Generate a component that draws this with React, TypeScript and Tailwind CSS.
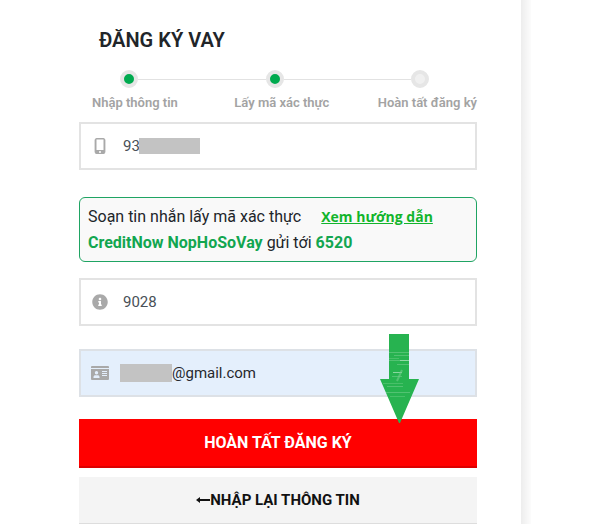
import { useState } from 'react';
import type { ReactNode } from 'react';
import { FaInfoCircle } from 'react-icons/fa';

const steps = [
	{ label: 'Nhập thông tin', done: true },
	{ label: 'Lấy mã xác thực', done: true },
	{ label: 'Hoàn tất đăng ký', done: false },
];

function StepDot({ done }: { done: boolean }) {
	return (
		<span
			className={`h-[18px] w-[18px] shrink-0 rounded-full border-4 border-[#e6e6e6] ${
				done ? 'bg-[#00aa4f]' : 'bg-[#f0f0f0]'
			}`}
		/>
	);
}

function StepLine() {
	return <span className="h-px flex-1 bg-[#e2e2e2]" />;
}

function Field({
	icon,
	filled,
	children,
}: {
	icon: ReactNode;
	filled?: boolean;
	children: ReactNode;
}) {
	return (
		<label
			className={`flex h-12 items-center border-2 pl-[10px] text-[15px] ${
				filled
					? 'border-[#dde1e6] bg-[#e4effc] text-[#26282d]'
					: 'border-[#e3e3e3] bg-white text-[#495057]'
			}`}
		>
			<span className="flex w-[18px] shrink-0 justify-center text-[#a9a9a9]">
				{icon}
			</span>
			{children}
		</label>
	);
}

function PhoneIcon() {
	return (
		<svg width="12" height="16" viewBox="0 0 12 16" aria-hidden="true">
			<path
				fill="currentColor"
				fillRule="evenodd"
				d="M2.500 0h7a1.500 1.500 0 0 1 1.500 1.500v13a1.500 1.500 0 0 1-1.500 1.500h-7a1.500 1.500 0 0 1-1.500-1.500v-13A1.500 1.500 0 0 1 2.500 0zM2.500 1.500v10.500h7v-10.500zM6 13a1 1 0 1 0 0 2 1 1 0 0 0 0-2z"
			/>
			<path
				fill="none"
				stroke="currentColor"
				strokeWidth="0.8"
				d="M1 1.500v13M11 1.500v13"
			/>
		</svg>
	);
}

function CardIcon() {
	return (
		<svg width="18" height="14" viewBox="0 0 18 14" aria-hidden="true">
			<path
				fill="currentColor"
				fillRule="evenodd"
				d="M1 0h16a1 1 0 0 1 1 1v1H0V1a1 1 0 0 1 1-1zM0 3h18v10a1 1 0 0 1-1 1H1a1 1 0 0 1-1-1zM5.500 5a1.700 1.700 0 1 0 0 3.400 1.700 1.700 0 0 0 0-3.400zM2.500 12h6v-1c0-1.200-1-1.800-1.700-1.800H4.200c-.7 0-1.700.6-1.700 1.800zM11 5h5v1h-5zM11 7h5v1h-5zM11 9h5v1h-5z"
			/>
		</svg>
	);
}

function PointerArrow() {
	return (
		<svg width="40" height="90" viewBox="0 0 40 90" aria-hidden="true">
			<path fill="#27b350" d="M9 0h20v45h10L20 89h-1L0 45h9z" />
			<g fill="none" strokeWidth="1">
				<path
					d="M9 18.500h20M14 21.500h15M9 26.500h18M17 30.500h12M12 42.500h10M7 52.500h16M6 58.500h24"
					stroke="#6fcb88"
					opacity="0.6"
				/>
				<path
					d="M13 38.500h9M20 26.500h9"
					stroke="#a3dfb3"
					opacity="0.8"
				/>
				<path d="M22 36l-5 11" stroke="#6fcb88" strokeWidth="2" opacity="0.6" />
				<path d="M9 24.500h10M3 49.500h20M10 62.500h15" stroke="#48c069" />
			</g>
		</svg>
	);
}

function LeftArrow() {
	return (
		<svg width="14" height="8" viewBox="0 0 14 8" aria-hidden="true">
			<path fill="currentColor" d="M0 4l4-3v2h10v2H4v2z" />
		</svg>
	);
}

export default function App() {
	const [phone, setPhone] = useState('93');
	const [code, setCode] = useState('9028');
	const [email, setEmail] = useState('@gmail.com');

	return (
		<div className="flex bg-white font-['Roboto',sans-serif]">
			<main className="min-w-0 flex-1 pt-[26px] pr-[44px] pl-[79px]">
				<h1 className="pl-5 text-[20px] leading-7 font-semibold text-[#212529]">
					ĐĂNG KÝ VAY
				</h1>

				<div className="mt-4 flex items-center pr-12 pl-[41px]">
					<StepDot done={steps[0].done} />
					<StepLine />
					<StepDot done={steps[1].done} />
					<StepLine />
					<StepDot done={steps[2].done} />
				</div>
				<ol className="mt-[5px] flex justify-between pl-[13px] text-[13px] leading-5 font-semibold text-[#a3a3a3]">
					{steps.map((step) => (
						<li key={step.label} className="nth-2:pl-2">
							{step.label}
						</li>
					))}
				</ol>

				<form className="mt-[9px]" onSubmit={(e) => e.preventDefault()}>
					<Field icon={<PhoneIcon />}>
						<span className="relative ml-[14px] flex-1">
							<input
								type="tel"
								aria-label="Số điện thoại"
								value={phone}
								onChange={(e) => setPhone(e.target.value)}
								className="w-full outline-none"
							/>
							<span className="absolute top-[3px] left-4 h-4 w-[61px] bg-[#c3c3c3]" />
						</span>
					</Field>

					<div className="mt-[27px] rounded-md border border-[#1fa463] bg-[#f9f9f9] px-2 pt-[6px] pb-[5px] text-[16px] leading-[26px] text-[#212529]">
						<p>
							Soạn tin nhắn lấy mã xác thực
							<a
								href="#huong-dan"
								className="ml-5 font-['Open_Sans',sans-serif] text-[14px] leading-none font-bold text-[#12b52c] underline"
							>
								Xem hướng dẫn
							</a>
						</p>
						<p>
							<b className="text-[#12a650]">CreditNow NopHoSoVay</b> gửi tới{' '}
							<b className="text-[#12a650]">6520</b>
						</p>
					</div>

					<div className="mt-4">
						<Field icon={<FaInfoCircle size={16} />}>
							<input
								type="text"
								aria-label="Mã xác thực"
								value={code}
								onChange={(e) => setCode(e.target.value)}
								className="ml-[14px] min-w-0 flex-1 outline-none"
							/>
						</Field>
					</div>

					<div className="relative mt-[23px]">
						<Field filled icon={<CardIcon />}>
							<span className="ml-[11px] h-[18px] w-[52px] shrink-0 bg-[#c3c3c3]" />
							<input
								type="text"
								aria-label="Email"
								value={email}
								onChange={(e) => setEmail(e.target.value)}
								className="min-w-0 flex-1 outline-none"
							/>
						</Field>
						<span className="pointer-events-none absolute -top-[15px] right-[57px]">
							<PointerArrow />
						</span>
					</div>

					<button
						type="submit"
						className="mt-[22px] h-[49px] w-full border-b-2 border-[#dc0000] bg-[#ff0000] text-[16px] font-bold text-white"
					>
						HOÀN TẤT ĐĂNG KÝ
					</button>
					<button
						type="button"
						className="mt-[9px] flex h-[47px] w-full items-center justify-center border-b border-[#dddddd] bg-[#f4f4f4] text-[15px] font-bold text-[#111111]"
					>
						<LeftArrow />
						NHẬP LẠI THÔNG TIN
					</button>
				</form>
			</main>
			<aside className="w-[79px] shrink-0">
				<div className="h-full w-[10px] bg-linear-to-r from-[#ededed] to-[#fcfcfc]" />
			</aside>
		</div>
	);
}
